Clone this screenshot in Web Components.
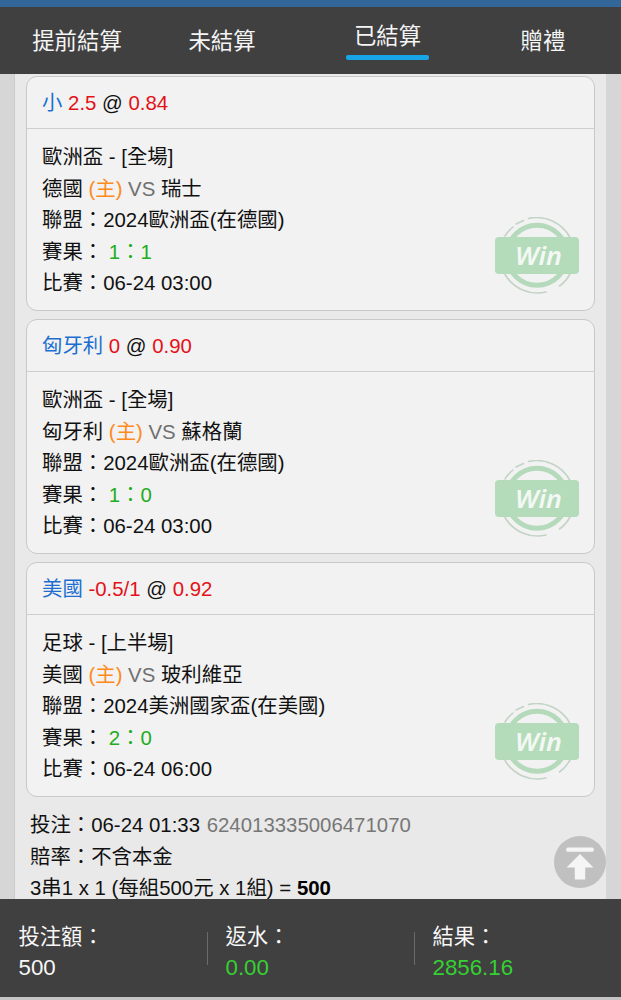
<!DOCTYPE html>
<html lang="zh-Hant">
<head>
<meta charset="utf-8">
<title>已結算</title>
<style>
html,body{margin:0;height:100%;overflow:hidden}
body{font-family:"Liberation Sans","Noto Sans CJK TC",sans-serif;font-size:20.4px;color:#111;background:#d6d6d6}
</style>
</head>
<body>
<bet-app></bet-app>
<script>
class Base extends HTMLElement{
  constructor(){super();this.attachShadow({mode:'open'})}
  connectedCallback(){this.shadowRoot.innerHTML=this.render()}
}
customElements.define('nav-tab',class extends Base{
  render(){return `<style>
  :host{display:block;box-sizing:border-box;height:67px;padding-top:19px;color:#f5f5f5;font-size:22.4px;line-height:32px;text-align:center;white-space:nowrap}
  :host([active]){padding-top:14px}
  i{display:none;height:5px;border-radius:2px;background:#18a5e8;margin-top:2px}
  :host([active]) i{display:block}
  </style><slot></slot><i></i>`}
});
customElements.define('nav-tabs',class extends Base{
  render(){return `<style>
  :host{display:grid;grid-template-columns:154px 136px 195px 116px;height:67px;flex:none;background:#404040;border-top:7px solid #336699;position:relative;z-index:1}
  nav-tab[active]{width:83px;justify-self:center}
  </style><nav-tab>提前結算</nav-tab><nav-tab>未結算</nav-tab><nav-tab active>已結算</nav-tab><nav-tab>贈禮</nav-tab>`}
});
customElements.define('win-stamp',class extends Base{
  render(){return `<style>:host{display:block;width:84px;height:78px}svg{display:block}</style>
  <svg width="84" height="78" viewBox="0 0 84 78">
  <circle cx="42" cy="38.300" r="30" fill="none" stroke="#b5dabb" stroke-width="5"/>
  <g fill="none" stroke="#c3d3c6" stroke-width="1.6" stroke-linecap="round">
  <path d="M33.500 1.500A37.700 37.700 0 0 1 75 20.500"/><path d="M21 7L28.500 3.500"/><path d="M10 19Q13 14 18 10"/>
  <path d="M10 57.500A37.700 37.700 0 0 0 51 75"/><path d="M64.500 69Q71 64.500 75 57"/></g>
  <rect y="20" width="84" height="37" rx="4" fill="#b4dbba"/>
  <text x="43.500" y="48" text-anchor="middle" font-family="'Noto Sans','Open Sans',sans-serif" font-size="26" font-weight="600" font-style="italic" fill="#f4f8f4" textLength="47" lengthAdjust="spacingAndGlyphs">Win</text></svg>`}
});
customElements.define('bet-card',class extends Base{
  render(){const a=n=>this.getAttribute(n);return `<style>
  :host{display:block;box-sizing:border-box;height:235px;border:1.500px solid #c9c9c9;border-radius:11px;background:#f2f2f2;position:relative}
  header{height:50px;line-height:51px;padding-top:1px;border-bottom:1.500px solid #cecece;padding-left:15px;box-sizing:content-box}
  section{padding:13px 15px 0;line-height:31.500px;white-space:nowrap}
  p{margin:0;height:31.500px}
  b{font-weight:400}.pick{color:#1c6fd0}.red{color:#e31118}.home{color:#ff8a1c}.vs{color:#707070}.score{color:#20ad20}
  win-stamp{position:absolute;right:15px;top:140px}
  </style><header><b class="pick">${a('pick')}</b> <b class="red">${a('line')}</b> @ <b class="red">${a('odds')}</b></header>
  <section><p>${a('game')}</p><p>${a('home')} <b class="home">(主)</b> <b class="vs">VS</b> ${a('away')}</p><p>聯盟：${a('league')}</p><p>賽果： <b class="score">${a('score')}</b></p><p>比賽：${a('time')}</p></section><win-stamp></win-stamp>`}
});
customElements.define('bet-summary',class extends Base{
  render(){return `<style>:host{display:block;padding:13px 0 0 4px;line-height:31.500px;white-space:nowrap}p{margin:0;height:31.500px}span{color:#777;margin-left:1px}b{color:#000}</style>
  <p>投注：06-24 01:33 <span>624013335006471070</span></p><p>賠率：不含本金</p><p>3串1 x 1 (每組500元 x 1組) = <b>500</b></p>`}
});
customElements.define('to-top',class extends Base{
  render(){return `<style>:host{display:block;width:52px;height:52px}svg{display:block}</style>
  <svg width="52" height="52" viewBox="0 0 52 52"><circle cx="26" cy="26" r="26" fill="#c0c0c0"/><rect x="12.300" y="11.500" width="27.500" height="4.200" rx="1.500" fill="#f5f5f5"/><path d="M26 18L39.500 31.500H31.200V43.500H20.800V31.500H12.500Z" fill="#f5f5f5"/></svg>`}
});
customElements.define('total-item',class extends Base{
  render(){return `<style>:host{display:block;position:relative;color:#f7f7f7;font-size:21.300px;line-height:31px;padding-top:23px;white-space:nowrap}
  div{font-size:22.300px;line-height:30px}
  :host([green]) div{color:#35d032}
  :host([rule])::before{content:"";position:absolute;left:-18.600px;top:33px;width:1px;height:33px;background:#6a6a6a}
  </style><slot></slot><div>${this.getAttribute('value')}</div>`}
});
customElements.define('total-bar',class extends Base{
  render(){return `<style>:host{display:grid;grid-template-columns:207px 207px 1fr;box-sizing:border-box;padding-left:18.500px;height:101px;flex:none;background:#404040;border-bottom:3px solid #c4c4c4;position:relative;z-index:1}</style>
  <total-item value="500">投注額：</total-item><total-item value="0.00" green rule>返水：</total-item><total-item value="2856.16" green rule>結果：</total-item>`}
});
customElements.define('bet-app',class extends Base{
  render(){return `<style>
  :host{display:flex;flex-direction:column;height:1000px;width:621px;position:relative;overflow:hidden}
  main{flex:1;min-height:0;overflow:hidden;box-sizing:border-box;margin:0 15px 0 14px;padding:2px 11px 0 11px;background:#e9e9e9;border-left:1px solid #cbcbcb}
  .cards{display:grid;gap:8px}
  to-top{position:absolute;left:554px;top:836px}
  </style><nav-tabs></nav-tabs><main><div class="cards">
  <bet-card pick="小" line="2.5" odds="0.84" game="歐洲盃 - [全場]" home="德國" away="瑞士" league="2024歐洲盃(在德國)" score="1：1" time="06-24 03:00"></bet-card>
  <bet-card pick="匈牙利" line="0" odds="0.90" game="歐洲盃 - [全場]" home="匈牙利" away="蘇格蘭" league="2024歐洲盃(在德國)" score="1：0" time="06-24 03:00"></bet-card>
  <bet-card pick="美國" line="-0.5/1" odds="0.92" game="足球 - [上半場]" home="美國" away="玻利維亞" league="2024美洲國家盃(在美國)" score="2：0" time="06-24 06:00"></bet-card>
  </div><bet-summary></bet-summary></main><total-bar></total-bar><to-top></to-top>`}
});
</script>
</body>
</html>
